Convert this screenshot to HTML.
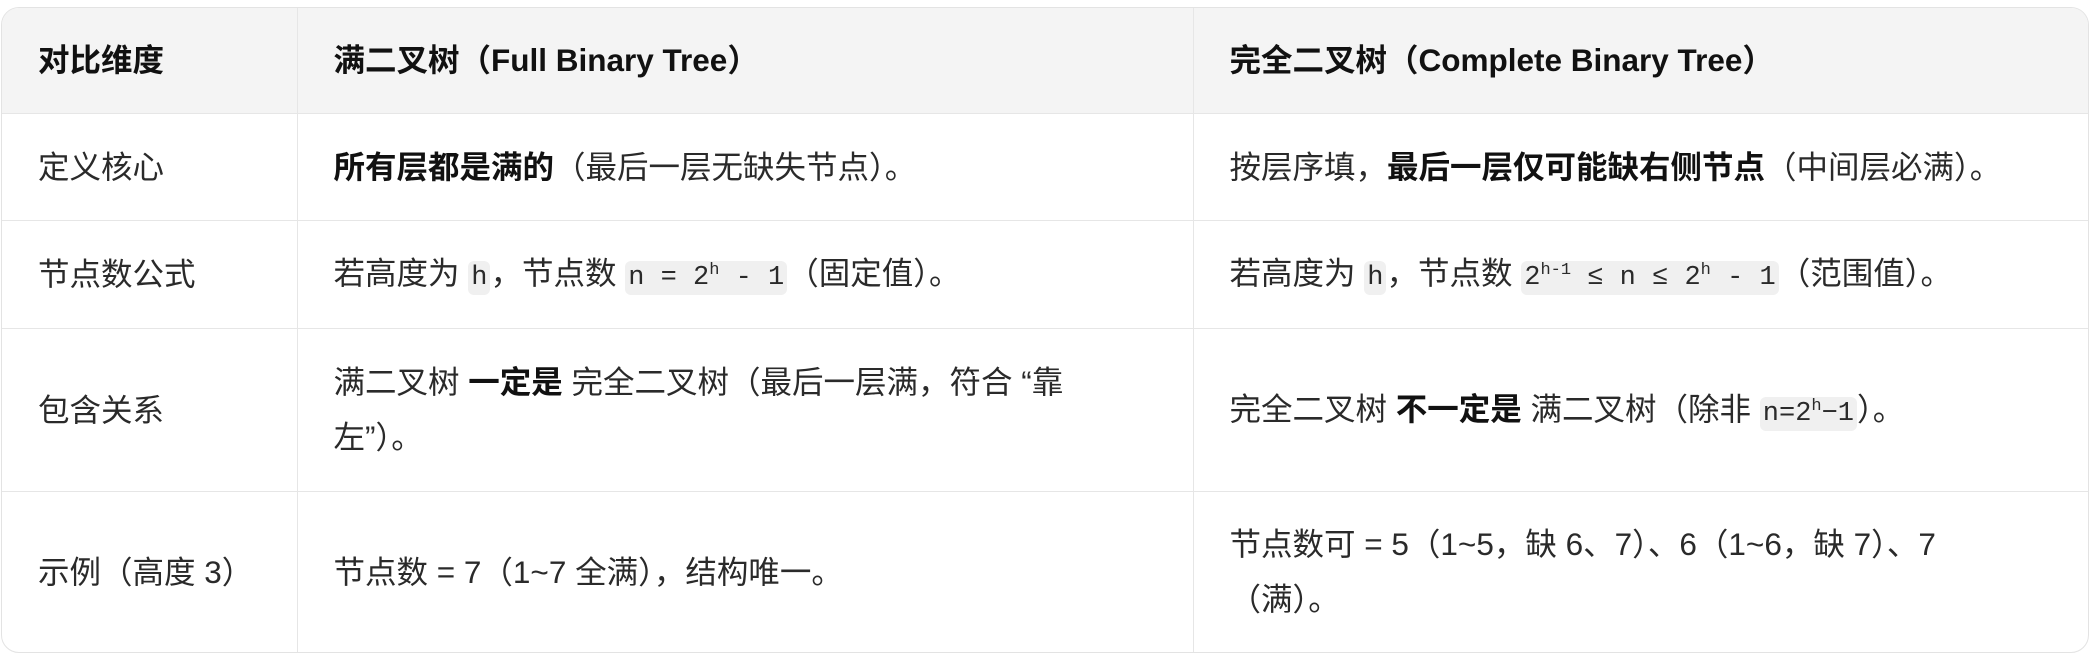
<!DOCTYPE html>
<html><head><meta charset="utf-8"><style>
html,body{margin:0;padding:0;background:#fff;width:2090px;height:660px;overflow:hidden}
.wrap{position:absolute;left:1px;top:7px;width:2086px;height:644px;border:1px solid #e3e3e3;border-radius:18px;overflow:hidden}
table{border-collapse:collapse;width:100%;font-family:"Liberation Sans","Noto Sans CJK SC",sans-serif;font-size:31.5px;color:#2a2a2a}
td,th{border-right:1.5px solid #e6e6e6;border-bottom:1.5px solid #e6e6e6;padding:0 0 0 36px;vertical-align:middle;text-align:left;white-space:nowrap;line-height:55px}
td:last-child,th:last-child{border-right:none}
tr:last-child td{border-bottom:none}
th{background:#f4f4f4;font-weight:bold;color:#111;height:105px}
b{color:#111}
code{font-family:"Liberation Mono","DejaVu Sans Mono",monospace;font-size:27px;background:#f0f0f0;border-radius:6px;padding:2px 3px}
sup{font-size:17px;vertical-align:10px}
</style></head><body>
<div class="wrap"><table>
<colgroup><col style="width:295px"><col style="width:896px"><col></colgroup>
<tr><th>对比维度</th><th>满二叉树（Full Binary Tree）</th><th>完全二叉树（Complete Binary Tree）</th></tr>
<tr style="height:107px"><td>定义核心</td><td><b>所有层都是满的</b>（最后一层无缺失节点）。</td><td>按层序填，<b>最后一层仅可能缺右侧节点</b>（中间层必满）。</td></tr>
<tr style="height:108px"><td>节点数公式</td><td>若高度为 <code>h</code>，节点数 <code>n = 2<sup>h</sup> - 1</code>（固定值）。</td><td>若高度为 <code>h</code>，节点数 <code>2<sup>h-1</sup> ≤ n ≤ 2<sup>h</sup> - 1</code>（范围值）。</td></tr>
<tr style="height:163px"><td>包含关系</td><td>满二叉树 <b>一定是</b> 完全二叉树（最后一层满，符合 “靠<br>左”）。</td><td>完全二叉树 <b>不一定是</b> 满二叉树（除非 <code>n=2<sup>h</sup>−1</code>）。</td></tr>
<tr style="height:161px"><td>示例（高度 3）</td><td>节点数 = 7（1~7 全满），结构唯一。</td><td>节点数可 = 5（1~5，缺 6、7）、6（1~6，缺 7）、7<br>（满）。</td></tr>
</table></div>
</body></html>
